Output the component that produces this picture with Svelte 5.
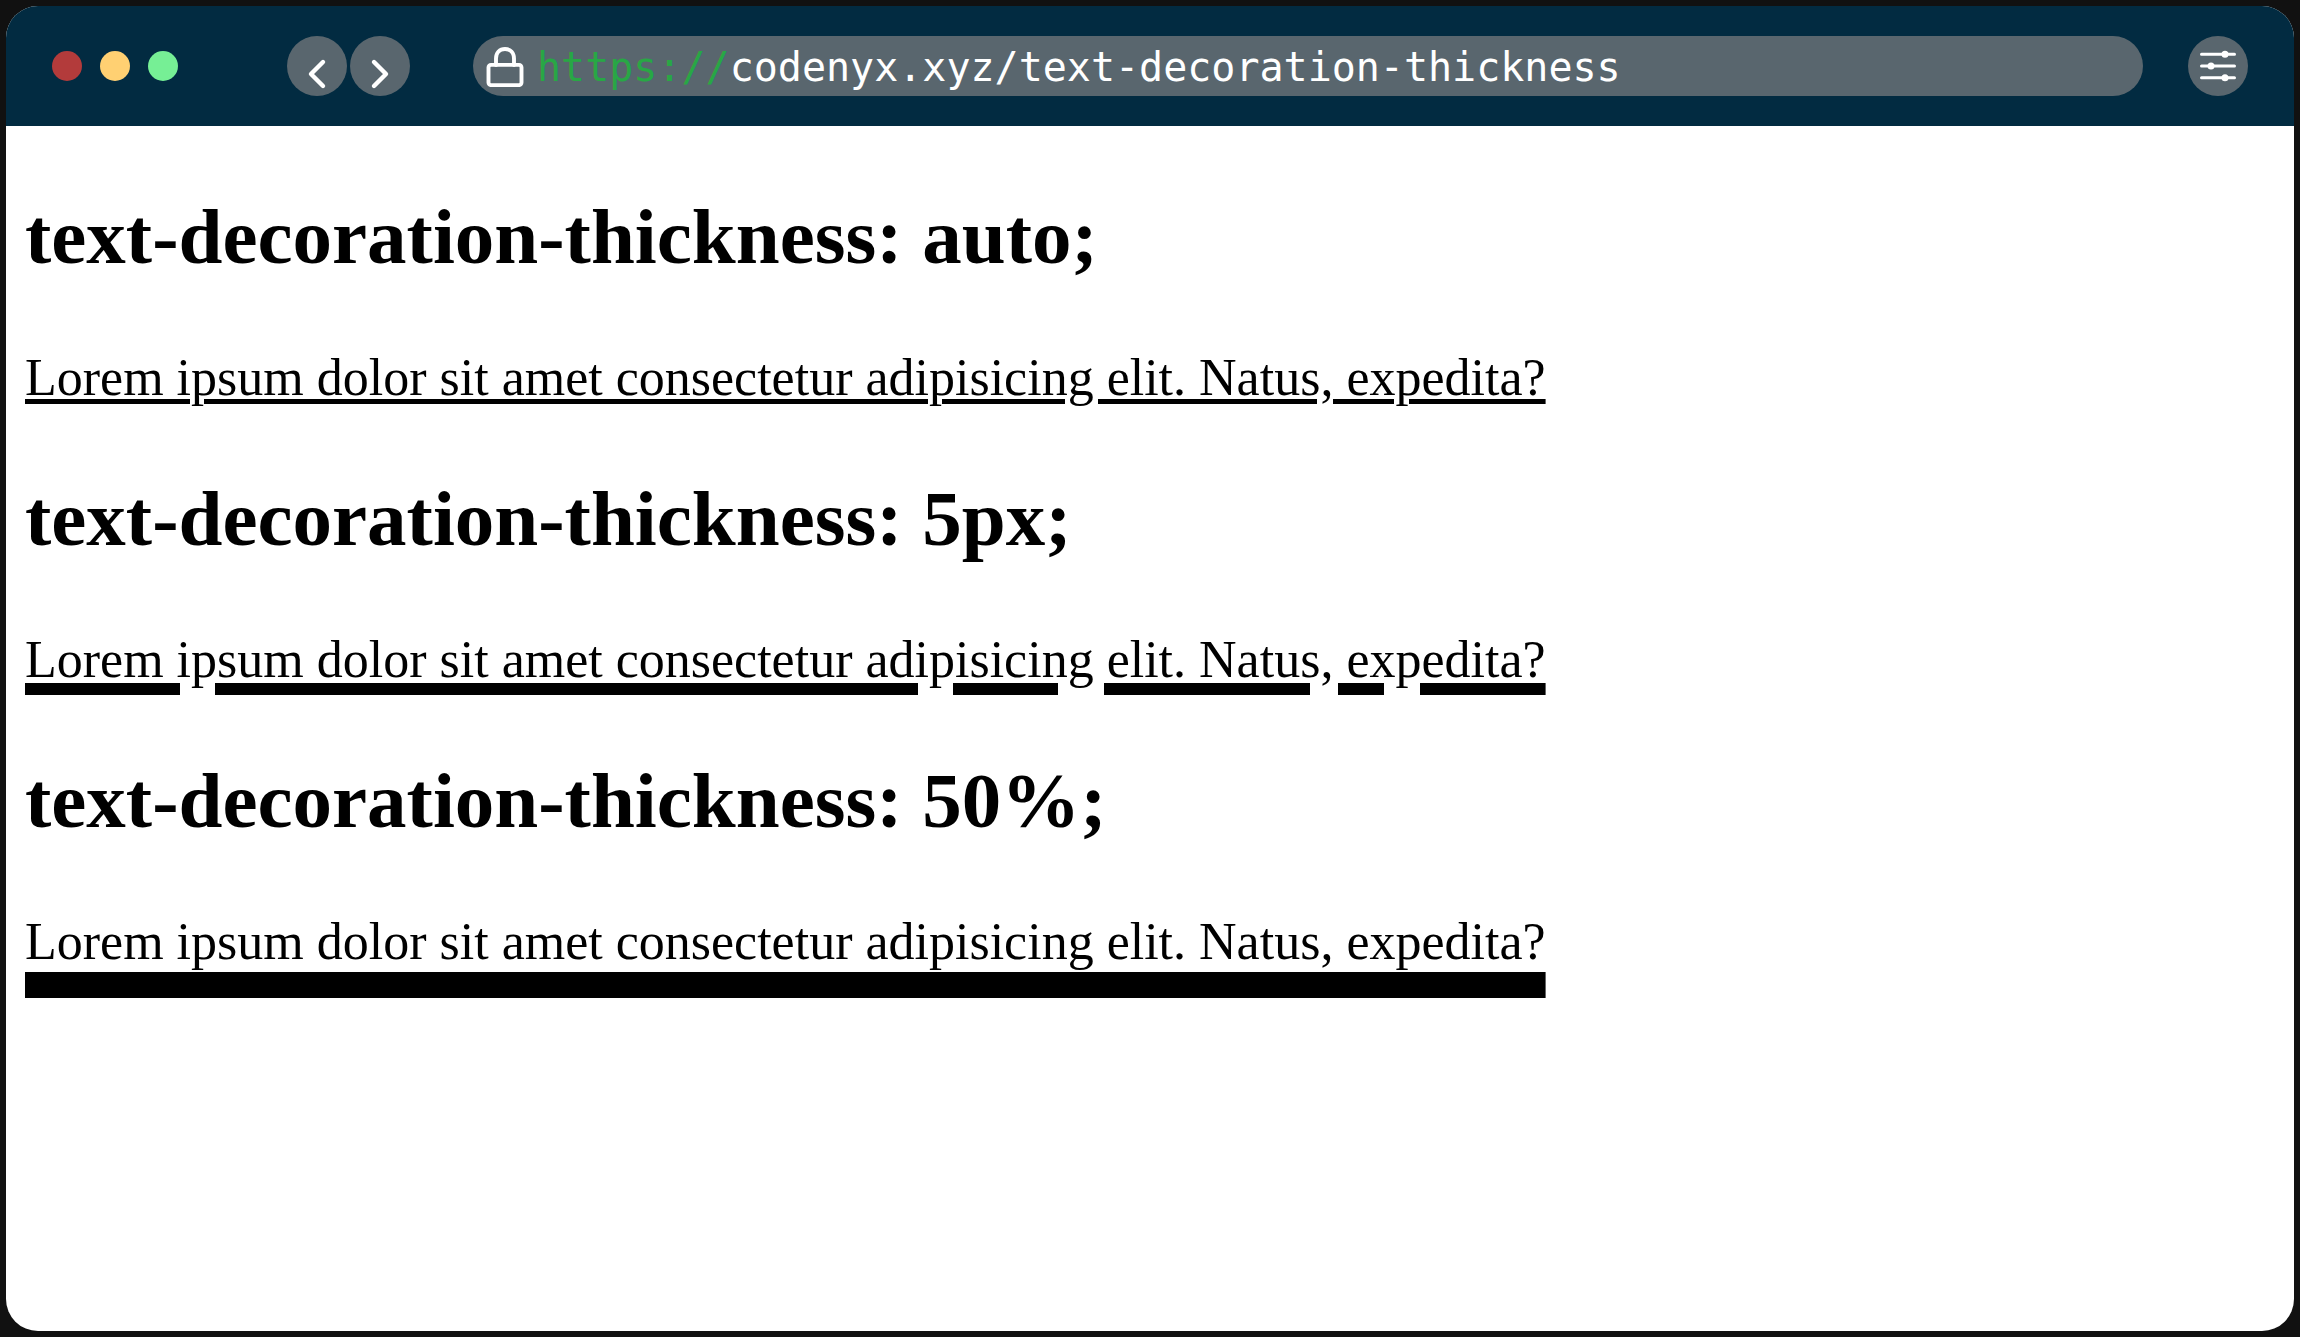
<script>
  const text = 'Lorem ipsum dolor sit amet consectetur adipisicing elit. Natus, expedita?';
  const examples = [
    { value: 'auto', kind: 'auto' },
    { value: '5px', kind: 'fixed' },
    { value: '50%', kind: 'half' }
  ];
</script>

<div class="desk">
  <div class="window">
    <header class="toolbar">
      <div class="lights">
        <span class="light red"></span>
        <span class="light yellow"></span>
        <span class="light green"></span>
      </div>
      <nav class="history">
        <button class="round" type="button" aria-label="Back">
          <svg viewBox="0 0 60 60"><path d="M36 26 L24 38 L36 50" stroke-width="4.4" /></svg>
        </button>
        <button class="round" type="button" aria-label="Forward">
          <svg viewBox="0 0 60 60"><path d="M24 26 L36 38 L24 50" stroke-width="4.4" /></svg>
        </button>
      </nav>
      <div class="address">
        <svg class="lock" viewBox="0 0 38 40">
          <rect x="2.5" y="17.9" width="33" height="20.2" rx="2.5" stroke-width="3.9" />
          <path d="M10 18 V11.5 C10 5.8 13.6 2 19 2 S28 5.8 28 11.5 V18" stroke-width="3.9" />
        </svg>
        <a href="https://codenyx.xyz/text-decoration-thickness"><span class="scheme">https://</span>codenyx.xyz/text-decoration-thickness</a>
      </div>
      <button class="round" type="button" aria-label="Settings">
        <svg viewBox="0 0 60 60">
          <path d="M13.5 18.3 H46.5 M13.5 30 H46.5 M13.5 41.7 H46.5" stroke-width="3" />
          <g class="knobs">
            <circle cx="37" cy="18.3" r="3.5" />
            <circle cx="23" cy="30" r="3.5" />
            <circle cx="37" cy="41.7" r="3.5" />
          </g>
        </svg>
      </button>
    </header>
    <main>
      {#each examples as example}
        <section>
          <h2>text-decoration-thickness: {example.value};</h2>
          <p class={example.kind}>{text}</p>
        </section>
      {/each}
    </main>
  </div>
</div>

<style>
  :global(body) {
    margin: 0;
    background: #111;
  }
  .desk {
    box-sizing: border-box;
    min-height: 100vh;
    padding: 6px;
    display: flex;
    background: #111;
  }
  .window {
    flex: 1;
    min-width: 0;
    border-radius: 32px;
    overflow: hidden;
    background: #fff;
  }
  .toolbar {
    display: flex;
    align-items: center;
    padding: 30px 46px;
    background: #022b41;
  }
  .lights {
    display: flex;
    gap: 18px;
    margin-right: 109px;
  }
  .light {
    width: 30px;
    height: 30px;
    border-radius: 50%;
  }
  .red { background: #b33b3b; }
  .yellow { background: #ffd072; }
  .green { background: #76ef95; }
  .history {
    display: flex;
    gap: 3px;
    margin-right: 63px;
  }
  .round {
    flex: none;
    width: 60px;
    height: 60px;
    padding: 0;
    border: 0;
    border-radius: 50%;
    background: #59666e;
    cursor: pointer;
  }
  svg {
    display: block;
    fill: none;
    stroke: #fff;
    stroke-linecap: round;
    stroke-linejoin: round;
  }
  .knobs {
    fill: #fff;
    stroke: none;
  }
  .address {
    flex: 1;
    min-width: 0;
    height: 60px;
    box-sizing: border-box;
    margin-right: 45px;
    padding: 2px 13px 0;
    display: flex;
    align-items: center;
    gap: 13px;
    border-radius: 30px;
    background: #59666e;
  }
  .lock {
    flex: none;
    width: 38px;
    height: 40px;
  }
  a {
    color: #fff;
    font: 40px/60px "DejaVu Sans Mono", monospace;
    text-decoration: none;
    white-space: nowrap;
  }
  .scheme {
    color: #28a745;
  }
  main {
    display: flex;
    flex-direction: column;
    gap: 66px;
    padding: 66px 19px;
    color: #000;
    font-family: "Liberation Serif", "Times New Roman", serif;
  }
  h2 {
    margin: 0 0 66px;
    font-size: 79px;
    line-height: 90px;
    font-weight: 700;
  }
  p {
    margin: 0;
    font-size: 52px;
    line-height: 60px;
    text-decoration-line: underline;
  }
  .auto {
    text-decoration-thickness: 5px;
    text-underline-offset: 4px;
  }
  .fixed {
    text-decoration-thickness: 12px;
    text-underline-offset: 6px;
  }
  .half {
    text-decoration-thickness: 50%;
    text-underline-offset: 13px;
  }
</style>
